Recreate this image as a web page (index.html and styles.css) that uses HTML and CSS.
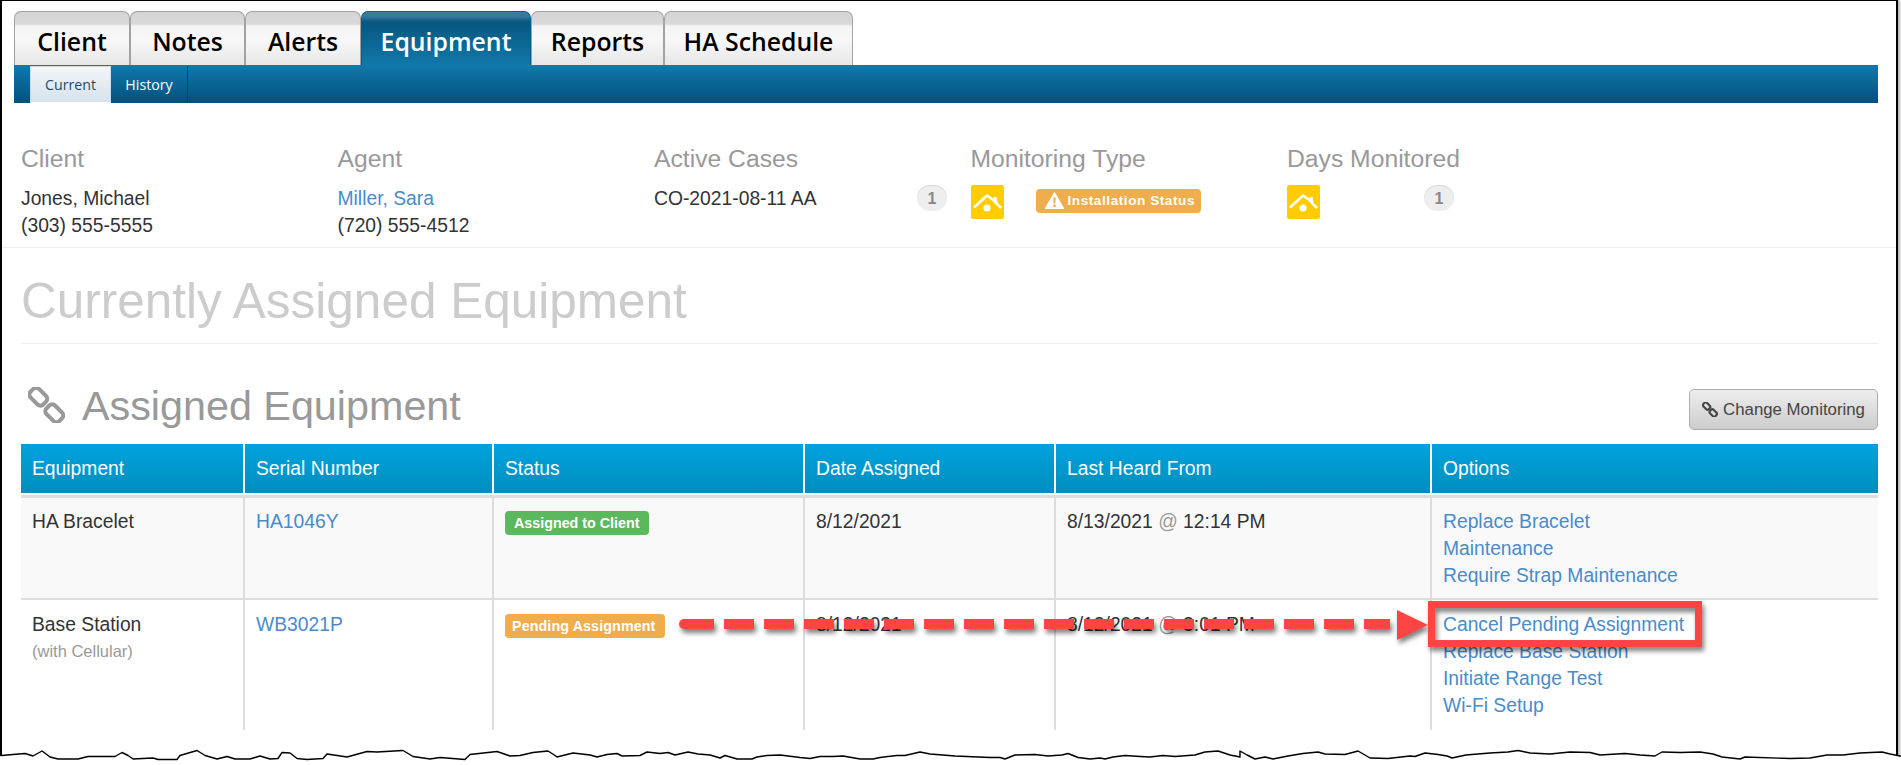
FILE: index.html
```html
<!DOCTYPE html>
<html lang="en">
<head>
<meta charset="utf-8">
<title>Equipment</title>
<link rel="stylesheet" href="styles.css">
</head>
<body>
<div class="shot">
  <div class="frame">
    <nav class="tabs">
      <a class="tab tab-client">Client</a>
      <a class="tab tab-notes">Notes</a>
      <a class="tab tab-alerts">Alerts</a>
      <a class="tab tab-equipment active">Equipment</a>
      <a class="tab tab-reports">Reports</a>
      <a class="tab tab-schedule">HA Schedule</a>
    </nav>
    <div class="subbar">
      <a class="subtab current">Current</a>
      <a class="subtab history">History</a>
    </div>

    <section class="info">
      <div class="info-col">
        <h3>Client</h3>
        <div class="line">Jones, Michael</div>
        <div class="line">(303) 555-5555</div>
      </div>
      <div class="info-col">
        <h3>Agent</h3>
        <div class="line"><a class="link">Miller, Sara</a></div>
        <div class="line">(720) 555-4512</div>
      </div>
      <div class="info-col">
        <h3>Active Cases</h3>
        <div class="line line-flex"><span class="case">CO-2021-08-11 AA</span><span class="badge">1</span></div>
      </div>
      <div class="info-col">
        <h3>Monitoring Type</h3>
        <div class="line-flex icon-row">
          <svg class="home" viewBox="0 0 33 34"><rect width="33" height="34" rx="2" fill="#ffcc00"/><path d="M3 22.5 16 10.5l6 4.2 2.6-1.7.6 5.4 5 4.6" fill="none" stroke="#fff" stroke-width="2.6" stroke-linejoin="round"/><path d="M25.200 12.500v7l-4-3.800z" fill="#fff"/><circle cx="16" cy="23" r="3.600" fill="#fff"/></svg>
          <span class="label label-orange label-install"><svg class="warn" viewBox="0 0 19 17"><path d="M9.500 .5 18.800 16.500H.2z" fill="#fff" stroke="#fff" stroke-linejoin="round"/><path d="M8.300 5.500h2.400l-.4 6H8.700zM8.300 12.600h2.400v2.300H8.300z" fill="#f0ad4e"/></svg>Installation Status</span>
        </div>
      </div>
      <div class="info-col">
        <h3>Days Monitored</h3>
        <div class="line-flex icon-row">
          <svg class="home" viewBox="0 0 33 34"><rect width="33" height="34" rx="2" fill="#ffcc00"/><path d="M3 22.500 16 10.500l6 4.200 2.600-1.700.6 5.400 5 4.600" fill="none" stroke="#fff" stroke-width="2.600" stroke-linejoin="round"/><path d="M25.200 12.500v7l-4-3.800z" fill="#fff"/><circle cx="16" cy="23" r="3.600" fill="#fff"/></svg>
          <span class="badge badge-days">1</span>
        </div>
      </div>
    </section>

    <div class="content">
      <h1 class="page-title">Currently Assigned Equipment</h1>
      <div class="section-head">
        <h2>
          <svg class="chain" viewBox="0 0 37 36"><g fill="none" stroke="#999" stroke-width="4"><rect x="1.300" y="3.700" width="18" height="12" rx="4" transform="rotate(45 10.300 9.700)"/><rect x="17.300" y="20.300" width="18" height="12" rx="4" transform="rotate(45 26.300 26.300)"/></g></svg>
          Assigned Equipment
        </h2>
        <button class="btn">
          <svg class="chain-small" viewBox="0 0 37 36"><g fill="none" stroke="#444" stroke-width="5"><rect x="1.300" y="3.700" width="18" height="12" rx="4" transform="rotate(45 10.300 9.700)"/><rect x="17.300" y="20.300" width="18" height="12" rx="4" transform="rotate(45 26.300 26.300)"/></g></svg>
          Change Monitoring
        </button>
      </div>

      <table class="grid">
        <colgroup>
          <col class="c1"><col class="c2"><col class="c3"><col class="c4"><col class="c5"><col class="c6">
        </colgroup>
        <thead>
          <tr><th>Equipment</th><th>Serial Number</th><th>Status</th><th>Date Assigned</th><th>Last Heard From</th><th>Options</th></tr>
        </thead>
        <tbody>
          <tr class="row-a">
            <td>HA Bracelet</td>
            <td><a class="link">HA1046Y</a></td>
            <td><span class="label label-green">Assigned to Client</span></td>
            <td>8/12/2021</td>
            <td>8/13/2021 <span class="at">@</span> 12:14 PM</td>
            <td><a class="link opt">Replace Bracelet</a><a class="link opt">Maintenance</a><a class="link opt">Require Strap Maintenance</a></td>
          </tr>
          <tr class="row-b">
            <td>Base Station<small class="sub">(with Cellular)</small></td>
            <td><a class="link">WB3021P</a></td>
            <td><span class="label label-orange label-pending">Pending Assignment</span></td>
            <td>8/12/2021</td>
            <td>8/12/2021 <span class="at">@</span> 3:01 PM</td>
            <td><a class="link opt">Cancel Pending Assignment</a><a class="link opt">Replace Base Station</a><a class="link opt">Initiate Range Test</a><a class="link opt">Wi-Fi Setup</a></td>
          </tr>
        </tbody>
      </table>
    </div>
  </div>

  <svg class="overlay" viewBox="0 0 1901 765" aria-hidden="true">
    <g class="callout">
      <line x1="684" y1="624" x2="1390" y2="624" stroke="#ff4444" stroke-width="10" stroke-dasharray="30 10"/>
      <circle cx="684" cy="624" r="5" fill="#ff4444"/>
      <polygon points="1397,610 1428,625 1397,640" fill="#ff4444"/>
      <rect x="1431.500" y="604.500" width="267" height="39" fill="none" stroke="#ff4444" stroke-width="7"/>
    </g>
    <g class="torn">
      <path fill="#fff" stroke="#000" stroke-width="1.400" stroke-linejoin="round" d="M-3 755 L2 755.500 13 754.500 25 753.500 33 756 42 751 50 757 58 759 78 759 88 756.500 115 756.500 122 752.500 128 755.500 133 759 153 758 158 759.500 177 759.500 180 755.500 197 750.500 205 755.500 217 759 227 756.500 235 759 250 759 260 756 270 759 278 758.500 282 752.500 290 753 297 758.500 307 759.500 323 758.500 327 754 347 757 367 751.500 377 752 403 750.500 413 756.500 430 759 440 757.500 465 759.500 470 754.500 497 751.500 510 756 520 755.500 533 752.500 548 751 555 755.500 557 757 573 753 590 755 597 757 607 754.500 617 753.500 622 756 640 755.500 647 752 660 753.500 668 752.500 675 755 688 752 698 754 710 755 720 758 725 755.500 737 759 752 759 757 757 767 755.500 780 755 800 757.500 810 758.500 820 756.500 833 756.500 843 756 860 759 873 759 880 757.500 888 756.500 897 755.500 905 755.500 920 752 930 754 955 756 990 757.500 1000 757.500 1005 759 1015 755 1035 754.500 1048 756 1062 755 1068 753.500 1078 757.500 1090 759 1100 758 1105 759 1113 757 1125 755.500 1140 756.500 1150 757 1163 755.500 1175 756.500 1195 755 1205 752 1218 751 1230 755 1240 757 1240 751 1247 755 1255 759 1265 757 1273 759 1288 756 1303 753.500 1318 752 1325 754 1345 754.500 1358 751 1370 758 1388 758.500 1410 756 1415 756.500 1425 753 1438 754.500 1447 756 1452 758 1466 755 1490 753 1508 752 1518 750.500 1530 753 1550 754 1570 752 1590 752.500 1600 755 1625 753.500 1640 755 1655 756 1662 752 1680 752.500 1700 752 1713 754 1722 757 1740 759 1745 757 1790 758.500 1810 758 1827 755 1843 755 1860 753 1882 752 1890 754 1900 756 L1906 757 L1906 770 L-3 770 Z"/>
    </g>
  </svg>
</div>
</body>
</html>
```

FILE: styles.css
```css
* { box-sizing: border-box; }
html, body { margin: 0; padding: 0; background: #fff; }
body {
  width: 1901px;
  height: 765px;
  overflow: hidden;
  font-family: "Liberation Sans", Arial, sans-serif;
  font-size: 19.300px;
  line-height: 27px;
  color: #333;
}
.shot { position: relative; width: 1901px; height: 765px; }
.frame {
  width: 1898px;
  height: 762px;
  border-top: 1px solid #000;
  border-left: 2px solid #000;
  border-right: 2px solid #000;
  box-shadow: 2px 0 3px rgba(0, 0, 0, .3);
  padding-top: 10px;
}
.overlay { position: absolute; left: 0; top: 0; width: 1901px; height: 765px; pointer-events: none; }
.callout { filter: drop-shadow(2px 4px 2.500px rgba(0, 0, 0, .5)); }
.torn { filter: drop-shadow(1px 2px 1.500px rgba(0, 0, 0, .45)); }

/* main tabs */
.tabs {
  display: flex;
  margin-left: 12px;
  height: 54px;
  font-family: "Open Sans", sans-serif;
  font-weight: 600;
  font-size: 24.800px;
}
.tab {
  display: flex;
  align-items: center;
  justify-content: center;
  height: 54px;
  padding-top: 5px;
  color: #000;
  border: 1px solid #a2a2a2;
  border-bottom: 0;
  border-radius: 7px 7px 0 0;
  background: linear-gradient(#d4d4d4 0, #d9d9d9 12px, #f4f4f4 14px, #f8f8f8 28px, #e6e6e6 100%);
}
.tab-client { width: 116px; }
.tab-notes { width: 115px; }
.tab-alerts { width: 116px; }
.tab-equipment { width: 170px; }
.tab-reports { width: 133px; }
.tab-schedule { width: 189px; }
.tab.active {
  color: #fff;
  border-color: #0a5a86;
  background: linear-gradient(#3c7c9f 0, #33779c 5px, #07577f 10px, #1078aa 100%);
}

/* sub bar */
.subbar {
  display: flex;
  align-items: flex-end;
  margin-left: 12px;
  width: 1864px;
  height: 38px;
  background: linear-gradient(#1279ab, #02507d);
  font-family: "Open Sans", sans-serif;
  font-size: 14.200px;
}
.subtab {
  display: flex;
  align-items: center;
  justify-content: center;
  height: 37px;
}
.current {
  margin-left: 16px;
  width: 81px;
  color: #1f4a66;
  background: linear-gradient(#f2f6f9, #d5e2ed);
  border: 1px solid #c7dbe8;
  border-bottom-color: #fff;
}
.history {
  width: 77px;
  color: #fff;
  border-right: 1px solid #04405f;
}

/* client info */
.info {
  display: grid;
  grid-template-columns: repeat(5, 316.500px);
  height: 145px;
  padding: 42px 0 0 19px;
  border-bottom: 1px solid #eee;
}
.info h3 {
  margin: 0 0 13px;
  font-size: 24.700px;
  font-weight: 400;
  line-height: 27px;
  color: #999;
}
.line { height: 27px; }
.line-flex { display: flex; align-items: flex-start; }
.case { width: 263px; }
.badge {
  display: flex;
  align-items: center;
  justify-content: center;
  width: 30px;
  height: 26px;
  border-radius: 13px;
  background: #eee;
  color: #888;
  font-size: 16px;
  font-weight: 700;
  box-shadow: inset 0 1px 1px rgba(0, 0, 0, .1);
}
.home { width: 33px; height: 34px; flex: none; }
.badge-days { margin-left: 104px; }
.label {
  display: inline-flex;
  align-items: center;
  height: 24px;
  border-radius: 4px;
  color: #fff;
  font-size: 14.300px;
  font-weight: 700;
  line-height: 24px;
  white-space: nowrap;
}
.label-orange { background: #f0ad4e; }
.label-green { background: #5cb85c; width: 144px; padding-left: 9px; margin-top: 2px; }
.label-pending { width: 160px; padding-left: 7px; margin-top: 3px; letter-spacing: .1px; }
.label-install {
  width: 165px;
  margin: 4px 0 0 32px;
  padding-left: 9px;
  font-size: 13.600px;
  letter-spacing: .55px;
}
.warn { width: 19px; height: 17px; margin-right: 4px; margin-top: -2px; flex: none; }

/* main content */
.content { padding: 0 18px 0 19px; }
.page-title {
  margin: 0;
  height: 96px;
  padding-top: 24px;
  border-bottom: 1px solid #eee;
  font-size: 49.500px;
  font-weight: 400;
  line-height: 58px;
  color: #ccc;
}
.section-head {
  display: flex;
  justify-content: space-between;
  align-items: flex-start;
  height: 100px;
}
.section-head h2 {
  display: flex;
  align-items: center;
  margin: 38px 0 0;
  font-size: 41.300px;
  font-weight: 400;
  line-height: 48px;
  color: #999;
}
.chain { width: 37px; height: 36px; margin: -3px 17px 0 7px; flex: none; }
.btn {
  display: flex;
  align-items: center;
  justify-content: center;
  width: 189px;
  height: 41px;
  margin-top: 45px;
  padding: 0;
  border: 1px solid #adadad;
  border-radius: 5px;
  background: linear-gradient(#eee, #ccc);
  color: #444;
  font-family: inherit;
  font-size: 16.800px;
}
.chain-small { width: 16px; height: 15px; margin-right: 5px; flex: none; }

/* table */
.grid {
  table-layout: fixed;
  width: 1857px;
  border-collapse: collapse;
}
.c1 { width: 223px; }
.c2 { width: 249px; }
.c3 { width: 311px; }
.c4 { width: 251px; }
.c5 { width: 376px; }
.c6 { width: 447px; }
.grid th {
  height: 52px;
  padding: 0 11px 2px;
  border-bottom: 3px solid #ddd;
  border-left: 2px solid #fff;
  background: linear-gradient(#00a2de, #008ebd) no-repeat;
  background-size: 100% 49px;
  color: #fff;
  font-weight: 400;
  text-align: left;
}
.grid th:first-child { border-left: 0; }
.grid td {
  vertical-align: top;
  padding: 11px 11px 0;
  border-left: 2px solid #ddd;
  border-bottom: 2px solid #ddd;
}
.grid td:first-child { border-left: 0; }
.row-a td { height: 103px; padding-top: 10px; background: #f9f9f9; }
.row-b td { height: 131px; border-bottom: 0; }
.link { color: #4a8bcb; text-decoration: none; }
.opt { display: block; }
.at { color: #999; }
.sub { display: block; font-size: 16.500px; line-height: 26px; color: #999; }
```
